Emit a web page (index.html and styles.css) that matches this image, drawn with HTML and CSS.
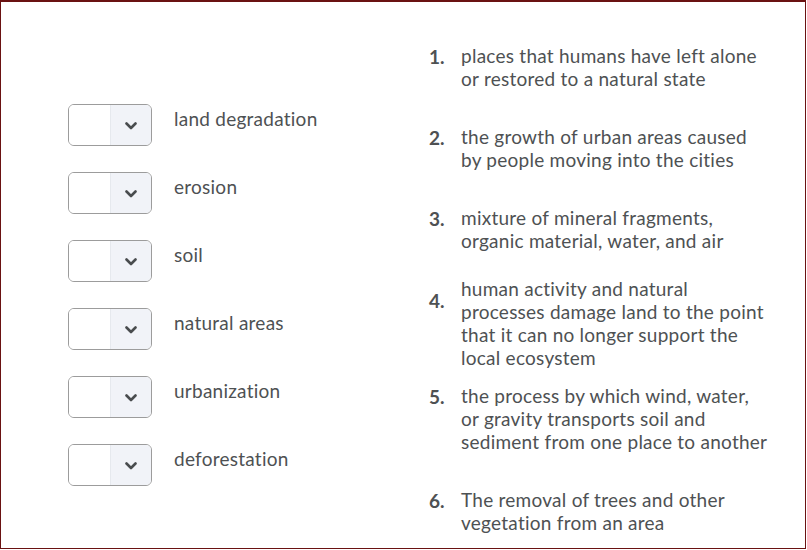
FILE: index.html
```html
<!DOCTYPE html>
<html>
<head>
<meta charset="utf-8">
<link rel="stylesheet" href="styles.css">
</head>
<body>
<div class="frame">
  <div class="choices">
    <div class="choice">
      <div class="select"><span class="sel-value"></span><span class="sel-btn"><svg width="12" height="8" viewBox="0 0 12 8"><path d="M1.5 1.5 L6 6 L10.5 1.5" fill="none" stroke="#494c4e" stroke-width="2.6" stroke-linecap="round" stroke-linejoin="round"/></svg></span></div>
      <span class="label">land degradation</span>
    </div>
    <div class="choice">
      <div class="select"><span class="sel-value"></span><span class="sel-btn"><svg width="12" height="8" viewBox="0 0 12 8"><path d="M1.5 1.5 L6 6 L10.5 1.5" fill="none" stroke="#494c4e" stroke-width="2.6" stroke-linecap="round" stroke-linejoin="round"/></svg></span></div>
      <span class="label">erosion</span>
    </div>
    <div class="choice">
      <div class="select"><span class="sel-value"></span><span class="sel-btn"><svg width="12" height="8" viewBox="0 0 12 8"><path d="M1.5 1.5 L6 6 L10.5 1.5" fill="none" stroke="#494c4e" stroke-width="2.6" stroke-linecap="round" stroke-linejoin="round"/></svg></span></div>
      <span class="label">soil</span>
    </div>
    <div class="choice">
      <div class="select"><span class="sel-value"></span><span class="sel-btn"><svg width="12" height="8" viewBox="0 0 12 8"><path d="M1.5 1.5 L6 6 L10.5 1.5" fill="none" stroke="#494c4e" stroke-width="2.6" stroke-linecap="round" stroke-linejoin="round"/></svg></span></div>
      <span class="label">natural areas</span>
    </div>
    <div class="choice">
      <div class="select"><span class="sel-value"></span><span class="sel-btn"><svg width="12" height="8" viewBox="0 0 12 8"><path d="M1.5 1.5 L6 6 L10.5 1.5" fill="none" stroke="#494c4e" stroke-width="2.6" stroke-linecap="round" stroke-linejoin="round"/></svg></span></div>
      <span class="label">urbanization</span>
    </div>
    <div class="choice">
      <div class="select"><span class="sel-value"></span><span class="sel-btn"><svg width="12" height="8" viewBox="0 0 12 8"><path d="M1.5 1.5 L6 6 L10.5 1.5" fill="none" stroke="#494c4e" stroke-width="2.6" stroke-linecap="round" stroke-linejoin="round"/></svg></span></div>
      <span class="label">deforestation</span>
    </div>
  </div>
  <ol class="defs">
    <li class="def gap-lg"><span class="num">1.</span><span class="txt">places that humans have left alone<br>or restored to a natural state</span></li>
    <li class="def gap-lg"><span class="num">2.</span><span class="txt">the growth of urban areas caused<br>by people moving into the cities</span></li>
    <li class="def gap-md"><span class="num">3.</span><span class="txt">mixture of mineral fragments,<br>organic material, water, and air</span></li>
    <li class="def gap-sm"><span class="num num-low">4.</span><span class="txt">human activity and natural<br>processes damage land to the point<br>that it can no longer support the<br>local ecosystem</span></li>
    <li class="def gap-lg"><span class="num">5.</span><span class="txt">the process by which wind, water,<br>or gravity transports soil and<br>sediment from one place to another</span></li>
    <li class="def"><span class="num">6.</span><span class="txt">The removal of trees and other<br>vegetation from an area</span></li>
  </ol>
</div>
</body>
</html>
```
FILE: styles.css
```css
* { box-sizing: border-box; }
html, body { margin: 0; padding: 0; background: #ffffff; }
body {
  font-family: Lato, "Open Sans", sans-serif;
  color: #4e5153;
  font-size: 19px;
  line-height: 23px;
  letter-spacing: 0.25px;
}
.frame {
  width: 806px;
  height: 549px;
  border: 1px solid #6a1212;
  border-top-width: 2px;
  display: flex;
  overflow: hidden;
}
.choices {
  width: 428px;
  padding-top: 102px;
  padding-left: 67px;
  display: flex;
  flex-direction: column;
  gap: 26px;
}
.choice {
  display: flex;
  align-items: flex-start;
}
.select {
  width: 84px;
  height: 42px;
  border: 1px solid #9c9c9c;
  border-radius: 6px;
  display: flex;
  overflow: hidden;
  flex: none;
}
.sel-value {
  width: 42px;
  background: #ffffff;
  border-right: 1px solid #e6e9ee;
}
.sel-btn {
  flex: 1;
  background: #f1f3f8;
  display: flex;
  align-items: center;
  justify-content: center;
  padding-top: 2px;
}
.label {
  margin-left: 22px;
  padding-top: 3px;
}
.defs {
  list-style: none;
  margin: 0;
  padding: 0;
  padding-top: 42px;
  display: flex;
  flex-direction: column;
}
.def {
  display: flex;
  align-items: flex-start;
}
.num {
  width: 32px;
  flex: none;
  font-weight: 700;
  letter-spacing: 0;
  padding-top: 1px;
}
.num-low { padding-top: 12px; }
.gap-lg { margin-bottom: 35px; }
.gap-md { margin-bottom: 25px; }
.gap-sm { margin-bottom: 15px; }
```
